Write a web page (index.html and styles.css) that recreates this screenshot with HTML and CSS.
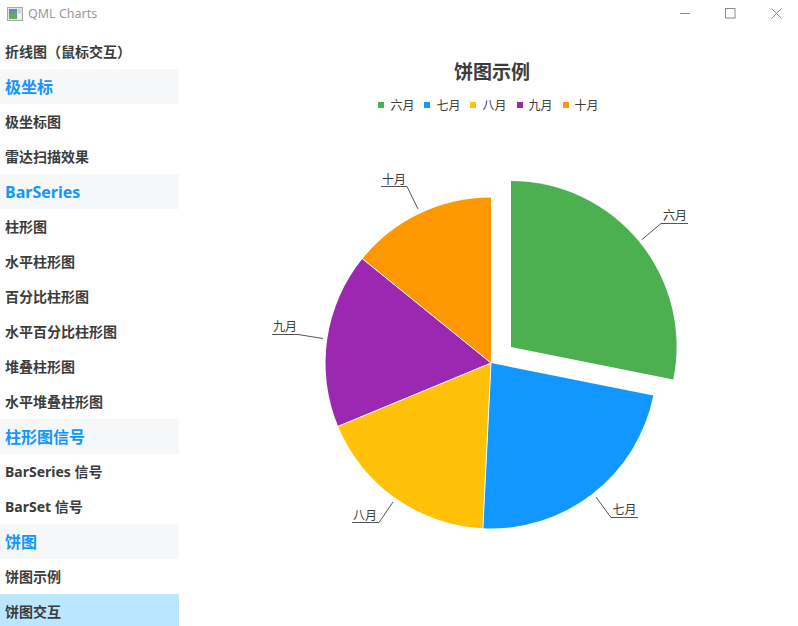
FILE: index.html
```html
<!DOCTYPE html>
<html lang="zh-CN">
<head>
    <meta charset="UTF-8">
    <title>QML Charts</title>
    <link rel="stylesheet" href="styles.css">
</head>
<body>
    <div class="window">
        <div class="titlebar">
            <svg class="app-icon" width="16" height="14" viewBox="0 0 16 14">
                <rect x="0.5" y="0.5" width="15" height="13" fill="#e6e6e6" stroke="#a8a8a8"/>
                <rect x="2" y="2" width="8" height="10" fill="#5d8cc0"/>
                <path d="M2 12 V8 L7 4 L10 6 V12 Z" fill="#6aa865"/>
                <rect x="11" y="2" width="3" height="4" fill="#c4d2e0"/>
                <rect x="11" y="7" width="3" height="5" fill="#f4f4f4"/>
            </svg>
            <span class="app-title">QML Charts</span>
            <div class="win-buttons">
                <svg width="11" height="11" viewBox="0 0 11 11"><path d="M1 5.5 H11" stroke="#888" fill="none"/></svg>
                <svg width="11" height="11" viewBox="0 0 11 11"><rect x="0.5" y="0.5" width="9.5" height="9.5" stroke="#888" fill="none"/></svg>
                <svg width="11" height="11" viewBox="0 0 11 11"><path d="M0.5 0.5 L10.5 10.5 M10.5 0.5 L0.5 10.5" stroke="#888" fill="none"/></svg>
            </div>
        </div>
        <div class="main">
            <div class="sidebar">
                <div class="nav-item">折线图（鼠标交互）</div>
                <div class="nav-group">极坐标</div>
                <div class="nav-item">极坐标图</div>
                <div class="nav-item">雷达扫描效果</div>
                <div class="nav-group latin">BarSeries</div>
                <div class="nav-item">柱形图</div>
                <div class="nav-item">水平柱形图</div>
                <div class="nav-item">百分比柱形图</div>
                <div class="nav-item">水平百分比柱形图</div>
                <div class="nav-item">堆叠柱形图</div>
                <div class="nav-item">水平堆叠柱形图</div>
                <div class="nav-group">柱形图信号</div>
                <div class="nav-item">BarSeries 信号</div>
                <div class="nav-item">BarSet 信号</div>
                <div class="nav-group">饼图</div>
                <div class="nav-item">饼图示例</div>
                <div class="nav-item active">饼图交互</div>
            </div>
            <div class="chart">
                <div class="chart-title">饼图示例</div>
                <div class="legend">
                    <div class="legend-item"><span class="marker green"></span>六月</div>
                    <div class="legend-item"><span class="marker blue"></span>七月</div>
                    <div class="legend-item"><span class="marker yellow"></span>八月</div>
                    <div class="legend-item"><span class="marker purple"></span>九月</div>
                    <div class="legend-item"><span class="marker orange"></span>十月</div>
                </div>
                <!-- viewBox uses window coordinates -->
                <svg class="pie" width="619" height="506" viewBox="179 120 619 506">
                    <path fill="#4caf50" d="M511 347 L511 181 A165.5 165.5 0 0 1 673.3 379.4 Z"/>
                    <path fill="#1296ff" d="M491 363 L653.3 395.4 A165.5 165.5 0 0 1 482.9 528.3 Z"/>
                    <path fill="#ffc107" d="M491 363 L482.9 528.3 A165.5 165.5 0 0 1 338.1 426.3 Z"/>
                    <path fill="#9c27b0" d="M491 363 L338.1 426.3 A165.5 165.5 0 0 1 362.4 258.8 Z"/>
                    <path fill="#ff9800" d="M491 363 L362.4 258.8 A165.5 165.5 0 0 1 491 197.5 Z"/>
                    <path class="seam" d="M491 363 L482.9 528.3 M491 363 L338.1 426.3 M491 363 L362.4 258.8"/>

                    <path class="leader" d="M642 239.5 L661 223.5 H688"/>
                    <path class="leader" d="M596 497 L611 517.5 H638"/>
                    <path class="leader" d="M393 502 L379 522.5 H352"/>
                    <path class="leader" d="M323 338.5 L298 334.5 H272"/>
                    <path class="leader" d="M418 209 L407 186.5 H381"/>

                    <text class="pie-label" x="675" y="220">六月</text>
                    <text class="pie-label" x="624.5" y="514">七月</text>
                    <text class="pie-label" x="365" y="520">八月</text>
                    <text class="pie-label" x="285" y="331">九月</text>
                    <text class="pie-label" x="394" y="184">十月</text>
                </svg>
            </div>
        </div>
    </div>
</body>
</html>
```

FILE: styles.css
```css
html, body {
    margin: 0;
    padding: 0;
    background: white;
}
body {
    font-family: "Noto Sans", "Noto Sans CJK SC", sans-serif;
    color: #3c3c3c;
}
.window {
    width: 798px;
    height: 626px;
    overflow: hidden;
    display: flex;
    flex-direction: column;
}
.titlebar {
    height: 30px;
    flex: none;
    display: flex;
    align-items: center;
    padding-left: 7px;
    box-sizing: border-box;
}
.app-icon {
    margin-right: 5px;
    margin-top: -3px;
}
.app-title {
    font-size: 12.5px;
    color: #999;
    margin-top: -3px;
}
.win-buttons {
    margin-left: auto;
    display: flex;
    gap: 35px;
    padding-right: 16px;
    margin-top: -4px;
}
.main {
    flex: 1;
    display: flex;
    min-height: 0;
}
.sidebar {
    width: 179px;
    flex: none;
    padding-top: 4px;
}
.nav-item, .nav-group {
    height: 35px;
    display: flex;
    align-items: center;
    padding: 0 0 2px 5px;
    font-weight: bold;
    box-sizing: border-box;
}
.nav-item {
    font-size: 14px;
}
.nav-group {
    font-size: 16px;
    color: #1296ff;
    background: #f5f7f9;
}
.nav-group.latin {
    padding-bottom: 0;
}
.nav-item.active {
    background: #bbe6ff;
}
.chart {
    flex: 1;
    display: flex;
    flex-direction: column;
    align-items: center;
}
.chart-title {
    font-size: 19px;
    font-weight: bold;
    line-height: 28px;
    margin-top: 28px;
    margin-left: 7px;
}
.legend {
    display: flex;
    gap: 10px;
    margin-top: 4px;
    height: 30px;
    align-items: center;
    font-size: 12px;
}
.legend-item {
    display: flex;
    align-items: center;
    gap: 6px;
}
.marker {
    width: 6px;
    height: 6px;
}
.green { background: #4caf50; }
.blue { background: #1296ff; }
.yellow { background: #ffc107; }
.purple { background: #9c27b0; }
.orange { background: #ff9800; }
.pie {
    display: block;
    flex: none;
}
.seam {
    fill: none;
    stroke: white;
    stroke-width: 1;
}
.leader {
    fill: none;
    stroke: #555;
    stroke-width: 1;
}
.pie-label {
    font-size: 12px;
    fill: #3c3c3c;
    text-anchor: middle;
}
```
